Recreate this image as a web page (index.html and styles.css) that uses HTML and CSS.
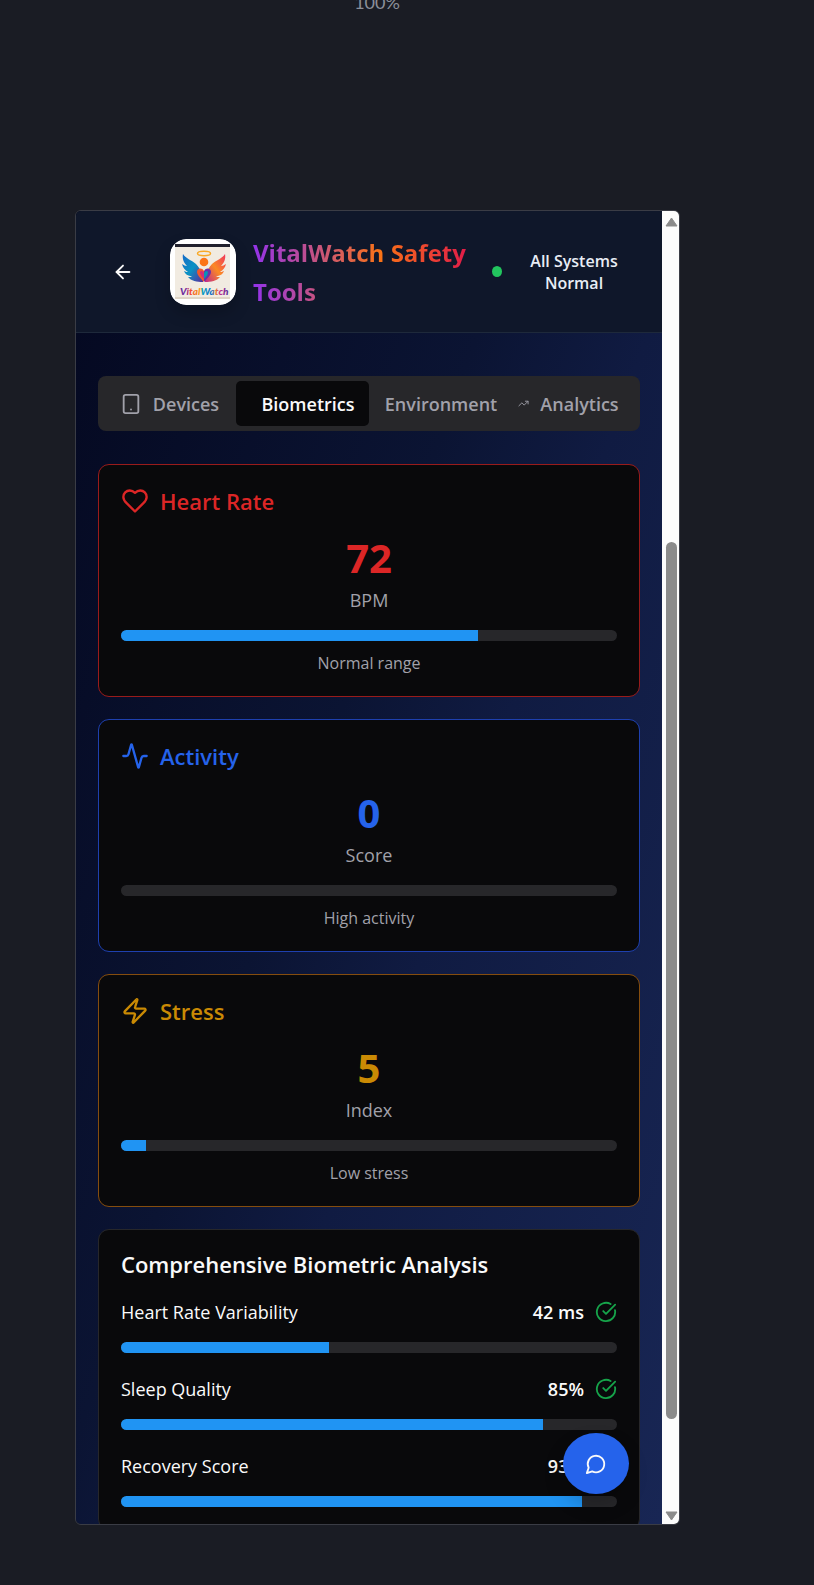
FILE: index.html
```html
<!DOCTYPE html>
<html lang="en">
<head>
<meta charset="utf-8">
<meta name="viewport" content="width=device-width, initial-scale=1">
<title>VitalWatch Safety Tools</title>
<link rel="stylesheet" href="styles.css">
</head>
<body>
<p class="zoom-level">100%</p>
<div class="frame">
  <div class="app">
    <header class="header">
      <button class="back" type="button" aria-label="Back">
        <svg class="icon icon-back" viewBox="0 0 24 24"><path d="m12 19-7-7 7-7"/><path d="M19 12H5"/></svg>
      </button>
      <svg class="logo" viewBox="0 0 66 66" role="img" aria-label="VitalWatch">
        <defs>
          <linearGradient id="wing-l" x1="0" y1="0" x2="1" y2="1"><stop offset="0" stop-color="#1769c8"/><stop offset=".5" stop-color="#0a93c4"/><stop offset="1" stop-color="#5b2a9c"/></linearGradient>
          <linearGradient id="wing-r" x1="1" y1="0" x2="0" y2="1"><stop offset="0" stop-color="#f0325f"/><stop offset=".5" stop-color="#fb8a24"/><stop offset="1" stop-color="#c0268c"/></linearGradient>
          <linearGradient id="word" x1="0" x2="1"><stop offset="0" stop-color="#5b2a9c"/><stop offset=".13" stop-color="#7a2aa0"/><stop offset=".2" stop-color="#f0443c"/><stop offset=".42" stop-color="#fba01c"/><stop offset=".46" stop-color="#0a9cc4"/><stop offset=".66" stop-color="#1769c8"/><stop offset=".72" stop-color="#f0882c"/><stop offset=".82" stop-color="#c0268c"/><stop offset="1" stop-color="#4a2a9c"/></linearGradient>
        </defs>
        <rect width="66" height="66" rx="16" fill="#fff"/>
        <rect x="5" y="5" width="55" height="55" fill="#f1ebe1"/>
        <rect x="5" y="5" width="55" height="3" fill="#20202c"/>
        <rect x="5" y="58" width="55" height="2" fill="#dfd5c6"/>
        <ellipse cx="34" cy="14.500" rx="6.500" ry="2.200" fill="none" stroke="#f9a825" stroke-width="1.500"/>
        <path fill="url(#wing-l)" d="M13 15c3 5 9 6 13 10 3 3 5 7 7 12v6c-6 0-12-1-15-5 2 0 3 0 4-1-4 0-7-2-8-5 2 1 3 1 4 1-3-2-5-4-6-8 2 1 3 2 5 2-3-3-5-7-4-12z"/>
        <path fill="url(#wing-r)" d="M55 15c-3 5-9 6-13 10-3 3-5 7-7 12v6c6 0 12-1 15-5-2 0-3 0-4-1 4 0 7-2 8-5-2 1-3 1-4 1 3-2 5-4 6-8-2 1-3 2-5 2 3-3 5-7 4-12z"/>
        <circle cx="34" cy="23" r="4.300" fill="#fb7418"/>
        <path fill="#f2572c" d="M34 43c-5-5-7-8-7-10 0-4 5-5 7-1z"/>
        <path fill="#6932a8" d="M34 43c5-5 7-8 7-10 0-4-5-5-7-1z"/>
        <path fill="#d22b7c" d="M34 40c-3-3-4-5-4-7 1-2 3-1 4 1z"/>
        <path fill="#0a93b4" d="M34 40c3-3 4-5 4-7-1-2-3-1-4 1z"/>
        <text class="logo-word" x="10" y="56" fill="url(#word)">VitalWatch</text>
      </svg>
      <h1 class="app-title"><span>VitalWatch Safety Tools</span></h1>
      <div class="status"><span class="status-dot"></span><span class="status-text">All Systems Normal</span></div>
    </header>

    <main class="main">
      <div class="tabs" role="tablist">
        <button class="tab" type="button" role="tab"><svg class="icon icon-tab" viewBox="0 0 24 24"><rect width="16" height="20" x="4" y="2" rx="2"/><path d="M12 18h.01"/></svg>Devices</button>
        <button class="tab tab-text tab-active" type="button" role="tab" aria-selected="true">Biometrics</button>
        <button class="tab tab-text" type="button" role="tab">Environment</button>
        <button class="tab" type="button" role="tab"><svg class="icon icon-trend" viewBox="0 0 24 24"><path d="m22 7-8.500 8.500-5-5L2 17"/><path d="M16 7h6v6"/></svg>Analytics</button>
      </div>

      <section class="card card-red">
        <h2 class="card-title"><svg class="icon icon-card" viewBox="0 0 24 24"><path d="M19 14c1.490-1.460 3-3.210 3-5.500A5.500 5.500 0 0 0 16.500 3c-1.760 0-3 .5-4.500 2-1.500-1.500-2.740-2-4.500-2A5.500 5.500 0 0 0 2 8.500c0 2.300 1.500 4.050 3 5.500l7 7Z"/></svg>Heart Rate</h2>
        <p class="value">72</p>
        <p class="unit">BPM</p>
        <div class="bar" role="progressbar" aria-label="Heart rate" aria-valuenow="72"><div class="fill" style="width:72%"></div></div>
        <p class="note">Normal range</p>
      </section>

      <section class="card card-blue">
        <h2 class="card-title"><svg class="icon icon-card" viewBox="0 0 24 24"><path d="M22 12h-2.480a2 2 0 0 0-1.930 1.460l-2.350 8.360a.25.25 0 0 1-.48 0L9.240 2.180a.25.25 0 0 0-.48 0l-2.350 8.360A2 2 0 0 1 4.490 12H2"/></svg>Activity</h2>
        <p class="value">0</p>
        <p class="unit">Score</p>
        <div class="bar" role="progressbar" aria-label="Activity" aria-valuenow="0"><div class="fill" style="width:0%"></div></div>
        <p class="note">High activity</p>
      </section>

      <section class="card card-yellow">
        <h2 class="card-title"><svg class="icon icon-card" viewBox="0 0 24 24"><path d="M4 14a1 1 0 0 1-.78-1.630l9.900-10.200a.5.5 0 0 1 .86.460l-1.920 6.020A1 1 0 0 0 13 10h7a1 1 0 0 1 .78 1.630l-9.900 10.200a.5.5 0 0 1-.86-.46l1.920-6.020A1 1 0 0 0 11 14z"/></svg>Stress</h2>
        <p class="value">5</p>
        <p class="unit">Index</p>
        <div class="bar" role="progressbar" aria-label="Stress" aria-valuenow="5"><div class="fill" style="width:5%"></div></div>
        <p class="note">Low stress</p>
      </section>

      <section class="card">
        <h2 class="card-title card-title-plain">Comprehensive Biometric Analysis</h2>
        <div class="metrics">
          <div>
            <div class="metric-row"><span>Heart Rate Variability</span><span class="metric-value">42 ms<svg class="icon icon-check" viewBox="0 0 24 24"><path d="M21.801 10A10 10 0 1 1 17 3.335"/><path d="m9 11 3 3L22 4"/></svg></span></div>
            <div class="bar" role="progressbar" aria-label="Heart rate variability" aria-valuenow="42"><div class="fill" style="width:42%"></div></div>
          </div>
          <div>
            <div class="metric-row"><span>Sleep Quality</span><span class="metric-value">85%<svg class="icon icon-check" viewBox="0 0 24 24"><path d="M21.801 10A10 10 0 1 1 17 3.335"/><path d="m9 11 3 3L22 4"/></svg></span></div>
            <div class="bar" role="progressbar" aria-label="Sleep quality" aria-valuenow="85"><div class="fill" style="width:85%"></div></div>
          </div>
          <div>
            <div class="metric-row"><span>Recovery Score</span><span class="metric-value">93%<svg class="icon icon-check" viewBox="0 0 24 24"><path d="M21.801 10A10 10 0 1 1 17 3.335"/><path d="m9 11 3 3L22 4"/></svg></span></div>
            <div class="bar" role="progressbar" aria-label="Recovery score" aria-valuenow="93"><div class="fill" style="width:93%"></div></div>
          </div>
        </div>
      </section>
    </main>

    <button class="chat" type="button" aria-label="Open chat">
      <svg class="icon icon-chat" viewBox="0 0 24 24"><path d="M7.900 20A9 9 0 1 0 4 16.100L2 22Z"/></svg>
    </button>
  </div>

  <div class="scrollbar" aria-hidden="true">
    <svg class="arrow" viewBox="0 0 13 10"><path d="M6.500 1 12 9H1z"/></svg>
    <div class="track"><div class="thumb"></div></div>
    <svg class="arrow" viewBox="0 0 13 10"><path d="M6.500 9 12 1H1z"/></svg>
  </div>
</div>
</body>
</html>
```
FILE: styles.css
```css
* {
  box-sizing: border-box;
  margin: 0;
}

body {
  display: flex;
  flex-direction: column;
  height: 100vh;
  overflow: hidden;
  background: #1a1c24;
  color: #fafafa;
  font-family: "Open Sans", "Noto Sans", sans-serif;
  font-size: 18px;
  line-height: 28px;
}

button {
  padding: 0;
  border: 0;
  background: none;
  color: inherit;
  font: inherit;
}

.zoom-level {
  height: 210px;
  margin-right: 60px;
  color: #8b8f99;
  font-family: Lato, sans-serif;
  line-height: 4px;
  text-align: center;
}

.icon {
  fill: none;
  stroke: currentColor;
  stroke-width: 2;
  stroke-linecap: round;
  stroke-linejoin: round;
}

.frame {
  display: flex;
  flex: 1;
  min-height: 0;
  margin: 0 134px 60px 75px;
  overflow: hidden;
  border: 1px solid #3a3c45;
  border-radius: 6px;
}

.app {
  position: relative;
  flex: 1;
  min-width: 0;
  overflow: hidden;
  background: linear-gradient(110deg, #040820, #0b1433 42%, #101b42 58%, #182654);
}

/* Header */

.header {
  display: flex;
  align-items: center;
  height: 122px;
  padding: 0 44px 0 36px;
  border-bottom: 1px solid #1e293b;
  background: #0f172a;
}

.back {
  display: flex;
  margin-right: 36px;
}

.icon-back {
  width: 22px;
  height: 22px;
}

.logo {
  flex: none;
  width: 66px;
  height: 66px;
  border-radius: 16px;
  box-shadow: 0 8px 16px rgba(0, 0, 0, .2);
}

.logo-word {
  font: italic 900 10px Lato, sans-serif;
}

.app-title {
  flex: 1;
  margin-left: 17px;
  font-size: 24px;
  font-weight: 700;
  line-height: 39px;
}

.app-title span {
  display: block;
  background: linear-gradient(90deg, #9333ea, #f97316 60%, #e11d48);
  -webkit-background-clip: text;
  background-clip: text;
  color: transparent;
}

.status {
  display: flex;
  align-items: center;
  gap: 28px;
  margin-left: 26px;
}

.status-dot {
  width: 10px;
  height: 11px;
  border-radius: 50%;
  background: #22c55e;
}

.status-text {
  width: 88px;
  color: #e8edf5;
  font-size: 16px;
  font-weight: 600;
  line-height: 22px;
  text-align: center;
}

/* Content */

.main {
  display: flex;
  flex-direction: column;
  gap: 22px;
  padding: 43px 22px 22px;
}

.tabs {
  display: grid;
  grid-template-columns: repeat(4, 1fr);
  height: 55px;
  margin-bottom: 11px;
  padding: 5px;
  border-radius: 8px;
  background: #27272a;
}

.tab {
  display: flex;
  align-items: center;
  justify-content: center;
  min-width: 0;
  border-radius: 5px;
  color: #a1a1aa;
  font-weight: 600;
}

.tab-text {
  padding-left: 11px;
}

.tab-active {
  background: #09090b;
  color: #fafafa;
}

.icon-tab {
  flex: none;
  width: 22px;
  height: 22px;
  margin-right: 11px;
}

.icon-trend {
  flex: none;
  width: 11px;
  height: 11px;
  margin-right: 11px;
}

.card {
  padding: 22px;
  border: 1px solid #27272a;
  border-radius: 11px;
  background: #09090b;
}

.card-red {
  border-color: #991b1b;
  --accent: #dc2626;
}

.card-blue {
  border-color: #1e40af;
  --accent: #2563eb;
}

.card-yellow {
  border-color: #854d0e;
  --accent: #ca8a04;
}

.card-title {
  display: flex;
  align-items: center;
  gap: 11px;
  color: var(--accent, #fafafa);
  font-size: 22px;
  font-weight: 600;
  line-height: 28px;
}

.card-title-plain {
  line-height: 24px;
}

.icon-card {
  width: 28px;
  height: 28px;
}

.value {
  margin-top: 23px;
  color: var(--accent);
  font-size: 40px;
  font-weight: 700;
  line-height: 40px;
  text-align: center;
}

.unit {
  margin: 8px 0 16px;
  color: #a1a1aa;
  text-align: center;
}

.note {
  margin-top: 11px;
  color: #a1a1aa;
  font-size: 16px;
  line-height: 22px;
  text-align: center;
}

.bar {
  height: 11px;
  overflow: hidden;
  border-radius: 6px;
  background: #27272a;
}

.fill {
  height: 100%;
  background: #2094f3;
}

.metrics {
  display: flex;
  flex-direction: column;
  gap: 22px;
  margin-top: 22px;
}

.metric-row {
  display: flex;
  justify-content: space-between;
  margin-bottom: 16px;
}

.metric-value {
  display: flex;
  align-items: center;
  gap: 11px;
  font-weight: 600;
}

.icon-check {
  width: 22px;
  height: 22px;
  color: #16a34a;
}

.chat {
  position: absolute;
  right: 33px;
  bottom: 30px;
  display: flex;
  align-items: center;
  justify-content: center;
  width: 66px;
  height: 61px;
  border-radius: 50%;
  background: #2563eb;
  box-shadow: 0 10px 20px rgba(0, 0, 0, .2);
}

.icon-chat {
  width: 22px;
  height: 22px;
}

/* Scrollbar */

.scrollbar {
  display: flex;
  flex-direction: column;
  align-items: center;
  width: 17px;
  padding: 6px 0 3px 2px;
  background: #fcfcfc;
}

.arrow {
  flex: none;
  width: 13px;
  height: 10px;
  fill: #8b8b8b;
  stroke: #8b8b8b;
  stroke-linejoin: round;
}

.track {
  display: flex;
  flex: 1;
  flex-direction: column;
  width: 11px;
  padding: 315px 0 92px;
}

.thumb {
  flex: 1;
  border-radius: 6px;
  background: #8b8b8b;
}
```
